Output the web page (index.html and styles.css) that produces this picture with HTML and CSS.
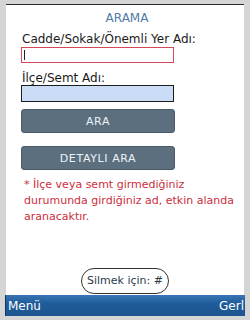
FILE: index.html
```html
<!DOCTYPE html>
<html lang="tr">
<head>
<meta charset="utf-8">
<link rel="stylesheet" href="styles.css">
</head>
<body>
<div class="screen">
  <div class="panel">
    <div class="title">ARAMA</div>
    <div class="form">
      <label class="label">Cadde/Sokak/Önemli Yer Adı:</label>
      <div class="input input-active"><span class="caret"></span></div>
      <label class="label label-2">İlçe/Semt Adı:</label>
      <div class="input input-blue"></div>
      <div class="btn btn-first">ARA</div>
      <div class="btn btn-second">DETAYLI ARA</div>
      <p class="note">* İlçe veya semt girmediğiniz<br>durumunda girdiğiniz ad, etkin alanda<br>aranacaktır.</p>
    </div>
    <div class="hint-row"><span class="hint">Silmek için: #</span></div>
  </div>
  <div class="softkeys">
    <span class="sk-left">Menü</span>
    <span class="sk-right">Gerl</span>
  </div>
</div>
</body>
</html>
```
FILE: styles.css
```css
html, body {
  margin: 0;
  padding: 0;
}
body {
  width: 250px;
  height: 320px;
  background: #d5d5d5;
  font-family: "DejaVu Sans", Verdana, sans-serif;
  overflow: hidden;
}
.screen {
  display: flex;
  flex-direction: column;
  padding-top: 4px;
  height: 316px;
}
.panel {
  margin: 0 6px;
  height: 291px;
  background: #ffffff;
  border-top: 1px solid #2a2a2a;
  box-sizing: border-box;
  display: flex;
  flex-direction: column;
}
.title {
  text-align: center;
  color: #4f7aa6;
  font-size: 12px;
  line-height: 13px;
  margin-top: 7px;
  padding-left: 4px;
}
.form {
  padding-left: 15px;
  display: flex;
  flex-direction: column;
  align-items: flex-start;
}
.label {
  font-size: 12px;
  line-height: 14px;
  color: #1a1a1a;
  margin-top: 7px;
  padding-left: 1px;
}
.label-2 {
  margin-top: 9px;
  line-height: 12px;
}
.input {
  width: 153px;
  height: 16px;
  box-sizing: border-box;
  margin-top: 1px;
  position: relative;
}
.input-active {
  border: 1px solid #d24a5a;
  background: #ffffff;
}
.caret {
  position: absolute;
  left: 2px;
  top: 2px;
  width: 1px;
  height: 10px;
  background: #222;
}
.input-blue {
  border: 1px solid #1c1c1c;
  background: #cadcf6;
  height: 17px;
}
.btn {
  width: 154px;
  height: 24px;
  box-sizing: border-box;
  background: #5b6f7f;
  border: 1px solid #4a5c6b;
  border-radius: 3px;
  color: #eef2f5;
  font-size: 11px;
  letter-spacing: 0.6px;
  display: flex;
  align-items: center;
  justify-content: center;
}
.btn-first {
  margin-top: 7px;
}
.btn-second {
  margin-top: 13px;
}
.note {
  margin: 7px 0 0 3px;
  color: #cc2e40;
  font-size: 11px;
  line-height: 16px;
}
.hint-row {
  margin-top: auto;
  margin-bottom: 1px;
  display: flex;
  justify-content: center;
}
.hint {
  border: 1px solid #333;
  border-radius: 13px;
  height: 26px;
  box-sizing: border-box;
  width: 88px;
  font-size: 11px;
  line-height: 24px;
  text-align: center;
  color: #2a3a4a;
}
.softkeys {
  margin: 0 5px;
  height: 21px;
  background: linear-gradient(#3a76b4, #1f5c9a 40%, #1c5590);
  border-left: 1px solid #15365a;
  display: flex;
  justify-content: space-between;
  align-items: center;
  color: #ffffff;
  font-size: 12px;
  padding: 0 1px 0 2px;
}
```
